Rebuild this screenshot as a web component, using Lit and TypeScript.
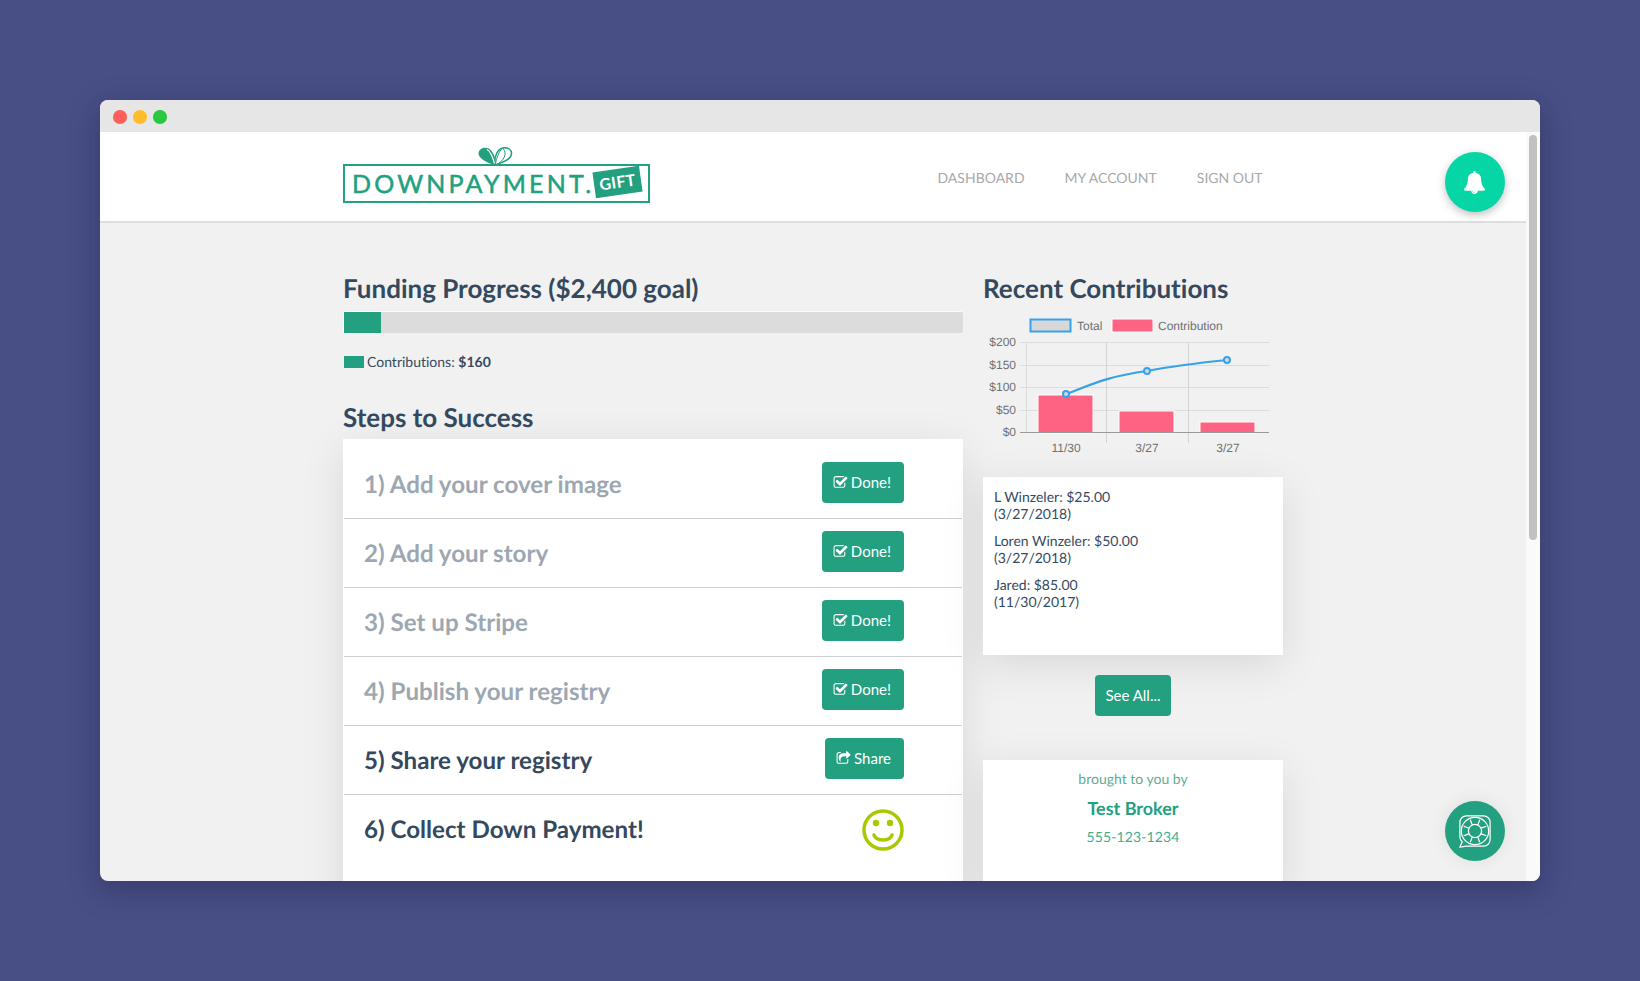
import { LitElement, html, css, svg } from "lit";
import { customElement } from "lit/decorators.js";

const bellPath = "M912 1696q0-16-16-16-59 0-101.5-42.5t-42.5-101.5q0-16-16-16t-16 16q0 73 51.5 124.5t124.5 51.5q16 0 16-16zm816-288q0 52-38 90t-90 38h-448q0 106-75 181t-181 75-181-75-75-181h-448q-52 0-90-38t-38-90q50-42 91-88t85-119.5 74.5-158.5 50-206 19.5-260q0-152 117-282.5t307-158.5q-8-19-8-39 0-40 28-68t68-28 68 28 28 68q0 20-8 39 190 28 307 158.5t117 282.5q0 139 19.5 260t50 206 74.5 158.5 85 119.5 91 88z";
const checkPath = "M1472 930v318q0 119-84.5 203.5t-203.5 84.5h-832q-119 0-203.5-84.5t-84.5-203.5v-832q0-119 84.5-203.5t203.5-84.5h832q63 0 117 25 15 7 18 23 3 17-9 29l-49 49q-10 10-23 10-3 0-9-2-23-6-45-6h-832q-66 0-113 47t-47 113v832q0 66 47 113t113 47h832q66 0 113-47t47-113v-254q0-13 9-22l64-64q10-10 23-10 6 0 12 3 20 8 20 29zm231-489l-814 814q-24 24-57 24t-57-24l-430-430q-24-24-24-57t24-57l110-110q24-24 57-24t57 24l263 263 647-647q24-24 57-24t57 24l110 110q24 24 24 57t-24 57z";
const sharePath = "M1472 989v259q0 119-84.5 203.5t-203.5 84.5h-832q-119 0-203.5-84.5t-84.5-203.5v-832q0-119 84.5-203.5t203.5-84.5h255q13 0 22.5 9.5t9.5 22.5q0 27-26 32-77 26-133 60-10 4-16 4h-112q-66 0-113 47t-47 113v832q0 66 47 113t113 47h832q66 0 113-47t47-113v-214q0-19 18-29 28-13 54-37 16-16 35-8 21 9 21 29zm237-496l-384 384q-18 19-45 19-12 0-25-5-39-17-39-59v-192h-160q-323 0-438 131-119 137-74 473 3 23-20 34-8 2-12 2-16 0-26-13-10-14-21-31t-39.5-68.5-49.5-99.5-38.5-114-17.5-122q0-49 3.5-91t14-90 28-88 47-81.5 68.5-74 94.5-61.5 124.5-48.5 159.5-30.5 196.5-11h160v-192q0-42 39-59 13-5 25-5 26 0 45 19l384 384q19 19 19 45t-19 45z";

const steps = [
  { label: "1) Add your cover image", done: true },
  { label: "2) Add your story", done: true },
  { label: "3) Set up Stripe", done: true },
  { label: "4) Publish your registry", done: true },
  { label: "5) Share your registry", done: false },
];

const contributions = [
  { who: "L Winzeler: $25.00", date: "(3/27/2018)" },
  { who: "Loren Winzeler: $50.00", date: "(3/27/2018)" },
  { who: "Jared: $85.00", date: "(11/30/2017)" },
];

function faIcon(path: string) {
  return html`<svg class="fa" viewBox="0 0 1792 1792"><path fill="currentColor" d=${path}></path></svg>`;
}

function chart() {
  // svg sits at x=983, y=310 on the page, coordinates below are local to it
  const yTicks = [
    ["$200", 32],
    ["$150", 55],
    ["$100", 77],
    ["$50", 100],
    ["$0", 122],
  ] as const;
  const bars = [
    [55, 85, 38, "11/30"],
    [136, 101, 22, "3/27"],
    [217, 112, 11, "3/27"],
  ] as const;
  return html`<svg class="chart" width="300" height="150" viewBox="0 0 300 150">
    <rect x="47.5" y="9.5" width="40" height="12" fill="#d8d8d8" stroke="#36a2eb" stroke-width="2"></rect>
    <text x="94" y="20">Total</text>
    <rect x="129" y="9" width="41" height="13" fill="#ff6384" stroke="#fff" stroke-width="1"></rect>
    <text x="175" y="20">Contribution</text>
    ${yTicks.map(
      ([t, y]) => svg`
        <line x1="37" x2="286" y1=${y + 0.5} y2=${y + 0.5} stroke=${t === "$0" ? "#999" : "#dcdcdc"}></line>
        <text x="33" y=${y + 4} text-anchor="end">${t}</text>`
    )}
    <line x1="43.5" x2="43.5" y1="32" y2="122" stroke="#dcdcdc"></line>
    <line x1="123.5" x2="123.5" y1="32" y2="133" stroke="#d4d4d4"></line>
    <line x1="205.5" x2="205.5" y1="32" y2="133" stroke="#d4d4d4"></line>
    ${bars.map(
      ([x, y, h, l]) => svg`
        <rect x=${x} y=${y} width="55" height=${h} fill="#ff6384" stroke="#fff" stroke-width="1"></rect>
        <text x=${x + 28} y="142" text-anchor="middle">${l}</text>`
    )}
    <line x1="37" x2="286" y1="122.5" y2="122.5" stroke="#999"></line>
    <path d="M83 84 C105 76 125 66 164 61 C190 56 215 53 244 50" fill="none" stroke="#36a2eb" stroke-width="2.2"></path>
    <circle cx="83" cy="84" r="3" fill="#d8d8d8" stroke="#36a2eb" stroke-width="2"></circle>
    <circle cx="164" cy="61" r="3" fill="#d8d8d8" stroke="#36a2eb" stroke-width="2"></circle>
    <circle cx="244" cy="50" r="3" fill="#d8d8d8" stroke="#36a2eb" stroke-width="2"></circle>
  </svg>`;
}

@customElement("app-root")
export class AppRoot extends LitElement {
  static styles = css`
    :host {
      display: block;
      height: 981px;
      padding: 100px;
      box-sizing: border-box;
      background: #484f85;
      overflow: hidden;
      font-family: Lato, "Liberation Sans", sans-serif;
      color: #34495e;
      text-rendering: geometricPrecision;
      font-variant-ligatures: none;
    }

    .window {
      position: relative;
      height: 781px;
      border-radius: 8px;
      overflow: hidden;
      background: #f1f1f1;
      box-shadow: 0 8px 30px rgba(20, 20, 60, 0.35);
      display: flex;
      flex-direction: column;
    }

    .titlebar {
      flex: none;
      height: 32px;
      box-sizing: border-box;
      padding: 2px 0 0 13px;
      background: #e6e6e6;
      display: flex;
      align-items: center;
      gap: 6.5px;
    }

    .dot {
      width: 13.5px;
      height: 13.5px;
      border-radius: 50%;
    }
    .dot.red { background: #ff5f57; }
    .dot.yellow { background: #ffbd2e; }
    .dot.green { background: #28c940; }

    .viewport {
      flex: 1;
      min-height: 0;
      display: flex;
    }

    .page {
      flex: 1;
      min-width: 0;
      overflow: hidden;
    }

    .scrollbar {
      flex: none;
      width: 14px;
      background: #fafafa;
      padding: 3px 3px 0;
      box-sizing: border-box;
    }

    .thumb {
      height: 405px;
      border-radius: 4px;
      background: #c1c1c1;
    }

    header {
      height: 91px;
      box-sizing: border-box;
      background: #fff;
      border-bottom: 2px solid #dedede;
      padding-left: 243px;
      display: flex;
    }

    .logo {
      position: relative;
      width: 307px;
      height: 39px;
      margin-top: 32px;
      box-sizing: border-box;
      border: 2px solid #22a080;
      color: #22a080;
      display: flex;
      align-items: center;
      padding-left: 7px;
      font-size: 25px;
      letter-spacing: 3.2px;
      white-space: nowrap;
      -webkit-text-stroke: 0.5px #22a080;
    }

    .bow {
      position: absolute;
      left: 132px;
      top: -19px;
    }

    .tag {
      position: absolute;
      left: 249px;
      top: 3px;
      width: 47px;
      height: 26px;
      background: #22a080;
      color: #fff;
      font-size: 16px;
      font-weight: 700;
      letter-spacing: 0.4px;
      -webkit-text-stroke: 0;
      display: flex;
      align-items: center;
      justify-content: center;
      transform: rotate(-8deg);
    }

    nav {
      display: flex;
      gap: 40px;
      margin-left: 287.5px;
      padding-top: 36px;
      font-size: 14px;
      line-height: 20px;
      color: #a8a8a8;
    }

    main {
      padding: 49px 0 0 243px;
      display: grid;
      grid-template-columns: 620px 300px;
      column-gap: 20px;
    }

    h2 {
      margin: 0;
      font-size: 26px;
      line-height: 32px;
      font-weight: 700;
      color: #34495e;
    }

    .progress {
      margin-top: 7px;
      height: 21px;
      background: #dcdcdc;
      border: 1px solid #fbfbfb;
      border-bottom: 0;
      border-right: 0;
      border-radius: 2px;
    }

    .progress-fill {
      width: 37px;
      height: 100%;
      background: #22a080;
    }

    .legend {
      margin-top: 19px;
      padding-left: 1px;
      display: flex;
      align-items: center;
      gap: 3px;
      font-size: 14px;
      line-height: 20px;
    }

    .swatch {
      width: 20px;
      height: 12px;
      background: #22a080;
    }

    .legend b { font-weight: 700; }

    .steps-title {
      margin-top: 29px;
    }

    .card {
      background: #fff;
      box-shadow: 0 10px 40px rgba(0, 0, 0, 0.1);
    }

    .steps {
      margin-top: 6px;
      padding: 11px 0 40px 0;
    }

    .step {
      height: 69px;
      box-sizing: border-box;
      padding: 12px 58px 0 20px;
      margin-left: 1px;
      margin-right: 1px;
      border-bottom: 1px solid #cfcfcf;
      display: flex;
      justify-content: space-between;
      align-items: flex-start;
    }

    .step:last-child { border-bottom: 0; }

    .step-label {
      font-size: 24.15px;
      line-height: 41px;
      font-weight: 700;
      color: #34495e;
      padding-top: 2px;
    }

    .step.done .step-label { color: #9da7b1; }

    .btn {
      height: 41px;
      box-sizing: border-box;
      padding: 0 13px 1px 11px;
      display: inline-flex;
      align-items: center;
      gap: 3px;
      background: #22a080;
      color: #fff;
      border: 0;
      border-radius: 4px;
      font: 400 15px Lato, "Liberation Sans", sans-serif;
    }

    .see-all .btn { padding: 0 10.5px 2px; }

    .fa {
      display: block;
      width: 15px;
      height: 15px;
    }

    .smile {
      display: block;
      margin-top: 2px;
    }

    .chart {
      display: block;
      margin-top: 6px;
    }

    .chart text {
      font: 12px "Liberation Sans", Arial, sans-serif;
      fill: #707070;
    }

    .list {
      margin-top: 17px;
      height: 178px;
      box-sizing: border-box;
      padding: 11px;
      font-size: 14px;
      line-height: 17px;
    }

    .list p { margin: 0 0 10px; }

    .see-all {
      display: flex;
      justify-content: center;
      margin-top: 20px;
    }

    .broker {
      margin-top: 44px;
      height: 130px;
      padding-top: 9px;
      box-sizing: border-box;
      text-align: center;
      color: #22a080;
    }

    .broker .by {
      font-size: 14px;
      line-height: 20px;
      color: #5fab92;
    }

    .broker .name {
      margin-top: 7px;
      font-size: 18px;
      line-height: 24px;
      font-weight: 700;
    }

    .broker .phone {
      margin-top: 7px;
      font-size: 14px;
      line-height: 20px;
      letter-spacing: 0.1px;
      color: #3fae90;
    }

    .fab {
      position: absolute;
      left: 1345px;
      width: 60px;
      height: 60px;
      border-radius: 50%;
      display: flex;
      align-items: center;
      justify-content: center;
      color: #fff;
    }

    .fab.bell {
      top: 52px;
      background: #06d6a5;
      box-shadow: 0 3px 8px rgba(0, 0, 0, 0.25);
    }

    .fab.bell svg { margin-right: 2px; }

    .fab.help {
      top: 701px;
      background: #22a080;
      box-shadow: 0 0 18px rgba(0, 0, 0, 0.08);
    }
  `;

  render() {
    return html`
      <div class="window">
        <div class="titlebar">
          <span class="dot red"></span>
          <span class="dot yellow"></span>
          <span class="dot green"></span>
        </div>
        <div class="viewport">
          <div class="page">
            <header>
              <div class="logo">
                <svg class="bow" width="36" height="19" viewBox="0 0 36 19" fill="none">
                  <path d="M18 18C11 16 1.5 12 1.5 6.5C1.5 2.5 5 0.7 8.5 0.7C13 0.7 16.5 5 18 11Z" fill="#22a080"></path>
                  <path d="M18 18C25 16 34.5 12 34.5 6.5C34.5 2.5 31 0.7 27.5 0.7C23 0.7 19.5 5 18 11Z" fill="#fff" stroke="#22a080" stroke-width="1.5"></path>
                  <path d="M10 2.5C14 4.5 16 11 17.5 16.5" stroke="#fff" stroke-width="1.2"></path>
                  <path d="M26 1.5C30 6 28 12 21.5 16.5M24.5 2C21.5 6 19.5 11 18.5 16.5" stroke="#22a080" stroke-width="1"></path>
                </svg>
                DOWNPAYMENT.
                <span class="tag">GIFT</span>
              </div>
              <nav>
                <span>DASHBOARD</span>
                <span>MY ACCOUNT</span>
                <span>SIGN OUT</span>
              </nav>
            </header>
            <main>
              <section>
                <h2>Funding Progress ($2,400 goal)</h2>
                <div class="progress"><div class="progress-fill"></div></div>
                <div class="legend">
                  <span class="swatch"></span>
                  <span>Contributions: <b>$160</b></span>
                </div>
                <h2 class="steps-title">Steps to Success</h2>
                <div class="card steps">
                  ${steps.map(
                    (s) => html`<div class="step ${s.done ? "done" : ""}">
                      <span class="step-label">${s.label}</span>
                      <button class="btn">
                        ${s.done
                          ? html`${faIcon(checkPath)} Done!`
                          : html`${faIcon(sharePath)} Share`}
                      </button>
                    </div>`
                  )}
                  <div class="step">
                    <span class="step-label">6) Collect Down Payment!</span>
                    <svg class="smile" width="42" height="42" viewBox="0 0 42 42" fill="none">
                      <circle cx="21" cy="21" r="19" stroke="#a8c800" stroke-width="3.5"></circle>
                      <circle cx="14" cy="14" r="3.2" fill="#a8c800"></circle>
                      <circle cx="28" cy="14" r="3.2" fill="#a8c800"></circle>
                      <path d="M12 26C14 32.5 28 32.5 30 26" stroke="#a8c800" stroke-width="3.5" stroke-linecap="round"></path>
                    </svg>
                  </div>
                </div>
              </section>
              <section>
                <h2>Recent Contributions</h2>
                ${chart()}
                <div class="card list">
                  ${contributions.map((c) => html`<p>${c.who}<br />${c.date}</p>`)}
                </div>
                <div class="see-all"><button class="btn">See All...</button></div>
                <div class="card broker">
                  <div class="by">brought to you by</div>
                  <div class="name">Test Broker</div>
                  <div class="phone">555-123-1234</div>
                </div>
              </section>
            </main>
          </div>
          <div class="scrollbar"><div class="thumb"></div></div>
        </div>
        <div class="fab bell">
          <svg width="23" height="23" viewBox="0 0 1792 1792"><path fill="currentColor" d=${bellPath}></path></svg>
        </div>
        <div class="fab help">
          <svg width="34" height="34" viewBox="0 0 36 36" fill="none" stroke="#fff" stroke-width="1.3" stroke-linejoin="round">
            <path d="M9 2H27C31 2 34 5 34 9V27C34 31 31 34 27 34H9L2 35L4.5 29.5C2.8 28 2 26 2 24V9C2 5 5 2 9 2Z"></path>
            <circle cx="18" cy="18" r="14.5"></circle>
            <circle cx="18" cy="18" r="7"></circle>
            <path d="M13 6L15 11.5M23 6L21 11.5M6 13L11.5 15M6 23L11.5 21M30 13L24.5 15M30 23L24.5 21M13 30L15 24.5M23 30L21 24.5"></path>
          </svg>
        </div>
      </div>
    `;
  }
}
